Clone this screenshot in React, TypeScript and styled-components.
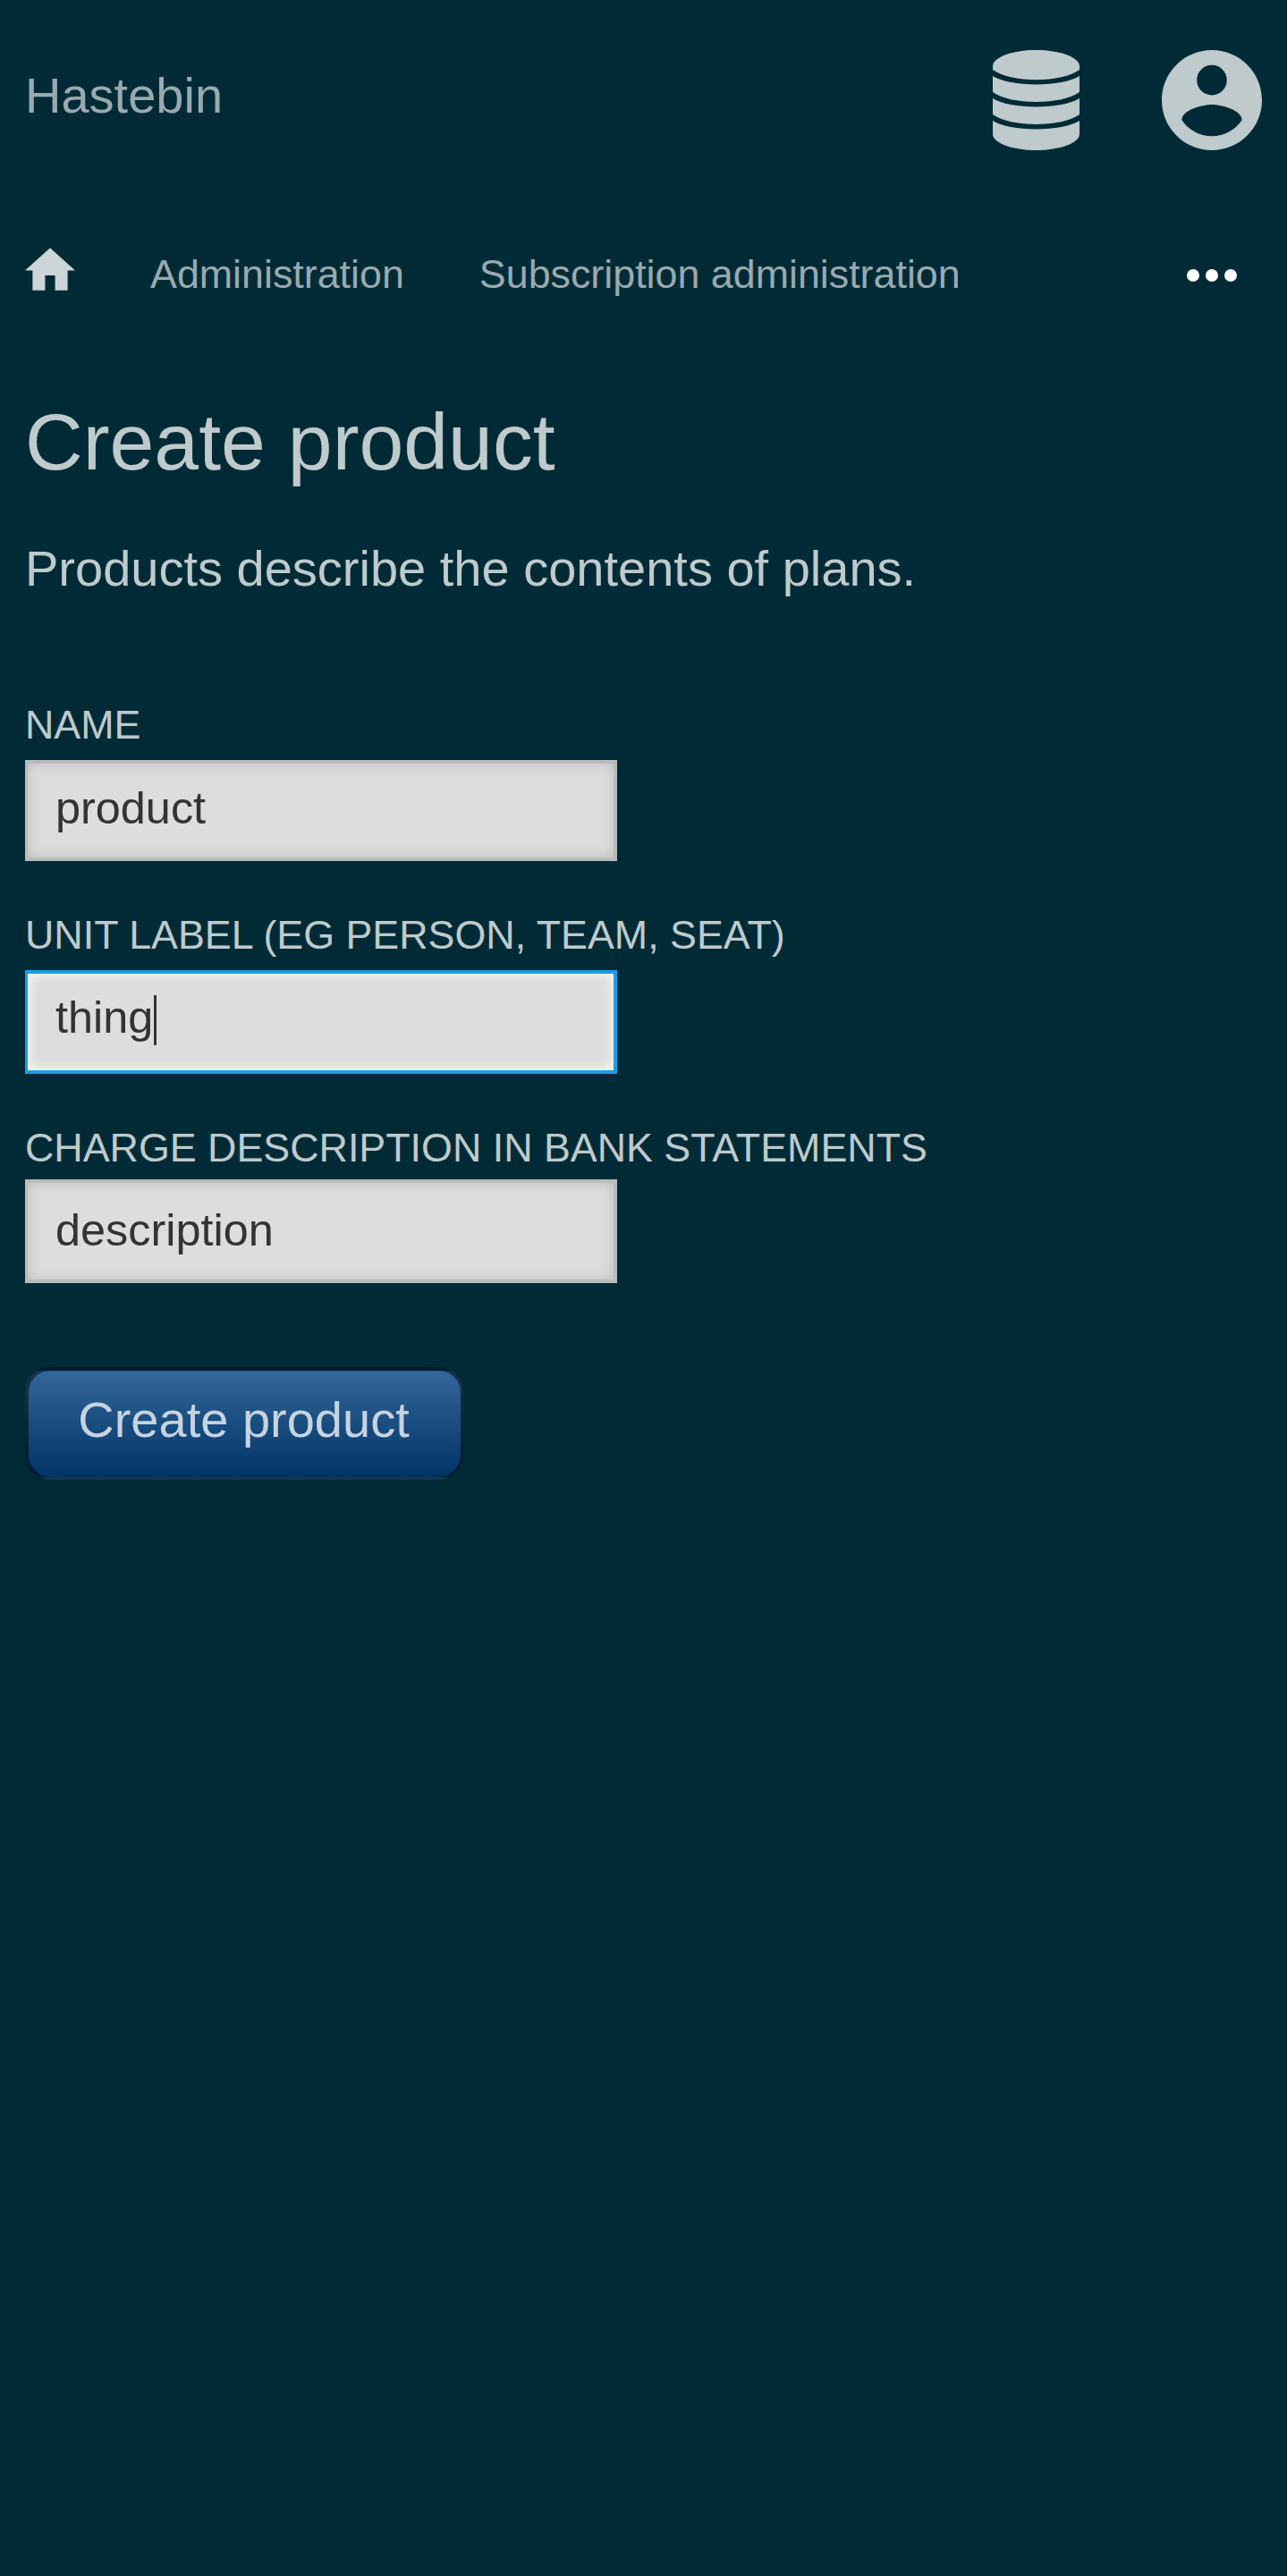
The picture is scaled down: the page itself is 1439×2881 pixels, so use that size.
import React from "react";
import styled, { createGlobalStyle } from "styled-components";

const Global = createGlobalStyle`
  html, body { margin: 0; padding: 0; background: #002b36; }
  * { box-sizing: border-box; }
`;
const Page = styled.div`
  min-height: 2881px;
  padding: 0 28px;
  background: #002b36;
  color: #bfcacd;
  font-family: "Liberation Sans", Arial, sans-serif;
  font-size: 56px;
`;
const Header = styled.header`
  height: 224px;
  padding-top: 56px;
  display: flex;
  justify-content: space-between;
  align-items: flex-start;
`;
const Brand = styled.a`
  margin-top: 19px;
  line-height: 63px;
  color: #99aaaf;
`;
const Actions = styled.div`
  display: flex;
  gap: 92px;
`;
const Icon = styled.svg<{ $w: number; $h: number; $color?: string }>`
  display: block;
  width: ${(p) => p.$w}px;
  height: ${(p) => p.$h}px;
  fill: ${(p) => p.$color ?? "#bfcacd"};
`;
const Nav = styled.nav`
  height: 168px;
  padding-top: 53px;
  display: flex;
  align-items: flex-start;
`;
const Crumb = styled.a`
  margin: 4px 0 0 84px;
  font-size: 44.8px;
  line-height: 51px;
  color: #99aaaf;
  white-space: nowrap;
`;
const More = styled.button`
  margin: 24px 28px 0 auto;
  padding: 0;
  border: 0;
  background: none;
`;
const Title = styled.h1`
  margin: 0;
  padding-top: 52px;
  font-size: 89.6px;
  font-weight: 400;
  line-height: 100px;
`;
const Intro = styled.p`
  margin: 60px 0 0;
  line-height: 63px;
`;
const Form = styled.form`
  display: flex;
  flex-direction: column;
  align-items: flex-start;
  padding-top: 118px;
`;
const Label = styled.label<{ $gap: number }>`
  font-size: 44.8px;
  line-height: 51px;
  text-transform: uppercase;
  white-space: nowrap;
  margin-bottom: ${(p) => p.$gap}px;
`;
const Field = styled.div<{ $focus?: boolean; $height: number; $top: number; $after: number }>`
  display: flex;
  align-items: flex-start;
  width: 662px;
  height: ${(p) => p.$height}px;
  padding: ${(p) => p.$top}px 31px 0;
  margin-bottom: ${(p) => p.$after}px;
  border: 4px solid ${(p) => (p.$focus ? "#189ee8" : "#bbb")};
  border-left-width: 3px;
  background: #ddd;
  box-shadow: inset 0 0 14px ${(p) => (p.$focus ? "#fff" : "#bbb")};
  color: #333;
  font-size: 50.4px;
  line-height: 57px;
`;
const Caret = styled.span`
  width: 3px;
  height: 56px;
  margin: 4px 0 0 0.5px;
  background: #333;
`;
const Submit = styled.button`
  width: 490px;
  height: 126px;
  padding: 0 2px 10px 0;
  border: solid rgba(0, 0, 0, 0.5);
  border-width: 4px 3px 3px 4px;
  border-radius: 28px;
  background: linear-gradient(#336699, #003366);
  color: #c6d3e0;
  font: 56px/63px "Liberation Sans", Arial, sans-serif;
`;

export default function App() {
  return (
    <Page>
      <Global />
      <Header>
        <Brand>Hastebin</Brand>
        <Actions>
          <Icon $w={97} $h={112} viewBox="0 0 97 112">
            <path d="M0 18C0 8 22 0 48.500 0S97 8 97 18v4C87 29 69 33.300 48.500 33.300S10 29 0 22z" />
            <path d="M0 29c10 6 28 9.500 48.500 9.500S87 35 97 29v18c-10 7-28 11-48.500 11S10 54 0 47z" />
            <path d="M0 54c10 6 28 9.500 48.500 9.500S87 60 97 54v18c-10 7-28 11-48.500 11S10 79 0 72z" />
            <path d="M0 79c10 6 28 9.500 48.500 9.500S87 85 97 79v15c0 10-22 18-48.500 18S0 104 0 94z" />
          </Icon>
          <Icon $w={112} $h={112} viewBox="2 2 20 20">
            <path d="M12 2C6.480 2 2 6.480 2 12s4.480 10 10 10 10-4.480 10-10S17.520 2 12 2zm0 3c1.660 0 3 1.340 3 3s-1.340 3-3 3-3-1.340-3-3 1.340-3 3-3zm0 14.200c-2.500 0-4.710-1.280-6-3.220.030-1.990 4-3.080 6-3.080 1.990 0 5.970 1.090 6 3.080-1.290 1.940-3.500 3.220-6 3.220z" />
          </Icon>
        </Actions>
      </Header>
      <Nav>
        <Icon $w={56} $h={48} $color="#ccd5d7" viewBox="2 3 20 17">
          <path d="M10 20v-6h4v6h5v-8h3L12 3 2 12h3v8z" />
        </Icon>
        <Crumb>Administration</Crumb>
        <Crumb>Subscription administration</Crumb>
        <More aria-label="More">
          <Icon $w={56} $h={14} $color="#fff" viewBox="0 0 56 14">
            <circle cx="7" cy="7" r="7" />
            <circle cx="28" cy="7" r="7" />
            <circle cx="49" cy="7" r="7" />
          </Icon>
        </More>
      </Nav>
      <Title>Create product</Title>
      <Intro>Products describe the contents of plans.</Intro>
      <Form>
        <Label $gap={14}>Name</Label>
        <Field $height={113} $top={21} $after={57}>product</Field>
        <Label $gap={14}>Unit label (eg person, team, seat)</Label>
        <Field $focus $height={116} $top={20} $after={57}>
          thing
          <Caret />
        </Field>
        <Label $gap={10}>Charge description in bank statements</Label>
        <Field $height={116} $top={24} $after={94}>description</Field>
        <Submit type="button">Create product</Submit>
      </Form>
    </Page>
  );
}
